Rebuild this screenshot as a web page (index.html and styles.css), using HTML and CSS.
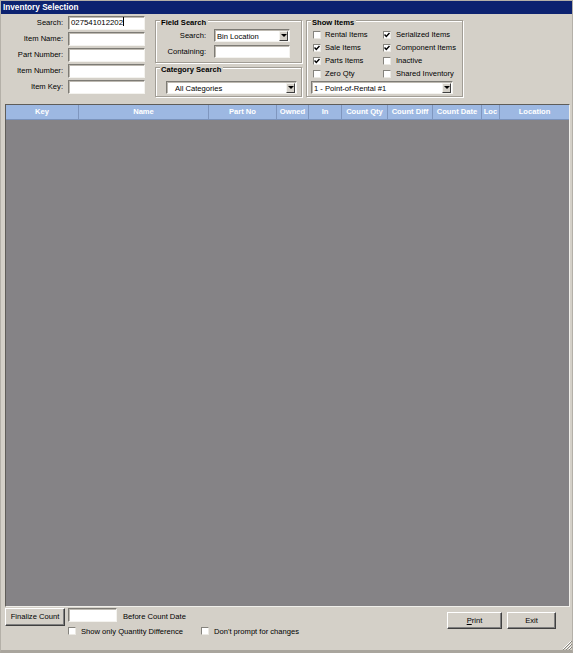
FILE: index.html
```html
<!DOCTYPE html>
<html>
<head>
<meta charset="utf-8">
<link rel="stylesheet" href="styles.css">
</head>
<body>
<div class="window">
  <div class="titlebar">Inventory Selection</div>
  <div class="top">
    <div class="search-form">
      <label>Search:</label><div class="input">027541012202<span class="caret"></span></div>
      <label>Item Name:</label><div class="input"></div>
      <label>Part Number:</label><div class="input"></div>
      <label>Item Number:</label><div class="input"></div>
      <label>Item Key:</label><div class="input"></div>
    </div>
    <div class="mid">
      <div class="group field-search">
        <div class="legend">Field Search</div>
        <div class="fs-body">
          <label>Search:</label>
          <div class="select"><span class="sel-text">Bin Location</span><span class="arrow"></span></div>
          <label>Containing:</label>
          <div class="input"></div>
        </div>
      </div>
      <div class="group cat-search">
        <div class="legend">Category Search</div>
        <div class="cat-body">
          <div class="select cat-select"><span class="sel-text">All Categories</span><span class="arrow"></span></div>
        </div>
      </div>
    </div>
    <div class="group show-items">
      <div class="legend">Show Items</div>
      <div class="checks">
        <div class="cbrow"><span class="cb"></span>Rental Items</div>
        <div class="cbrow"><span class="cb"><svg viewBox="0 0 6 6" width="6" height="6"><path d="M0.5 2.5 L2.3 4.4 L5.5 1" fill="none" stroke="#000" stroke-width="1.5"/></svg></span>Serialized Items</div>
        <div class="cbrow"><span class="cb"><svg viewBox="0 0 6 6" width="6" height="6"><path d="M0.5 2.5 L2.3 4.4 L5.5 1" fill="none" stroke="#000" stroke-width="1.5"/></svg></span>Sale Items</div>
        <div class="cbrow"><span class="cb"><svg viewBox="0 0 6 6" width="6" height="6"><path d="M0.5 2.5 L2.3 4.4 L5.5 1" fill="none" stroke="#000" stroke-width="1.5"/></svg></span>Component Items</div>
        <div class="cbrow"><span class="cb"><svg viewBox="0 0 6 6" width="6" height="6"><path d="M0.5 2.5 L2.3 4.4 L5.5 1" fill="none" stroke="#000" stroke-width="1.5"/></svg></span>Parts Items</div>
        <div class="cbrow"><span class="cb"></span>Inactive</div>
        <div class="cbrow"><span class="cb"></span>Zero Qty</div>
        <div class="cbrow"><span class="cb"></span>Shared Inventory</div>
      </div>
      <div class="select store-select"><span class="sel-text">1 - Point-of-Rental #1</span><span class="arrow"></span></div>
    </div>
  </div>

  <div class="grid">
    <div class="head">
      <div class="hc c-key">Key</div>
      <div class="hc c-name">Name</div>
      <div class="hc c-part">Part No</div>
      <div class="hc c-owned">Owned</div>
      <div class="hc c-in">In</div>
      <div class="hc c-cqty">Count Qty</div>
      <div class="hc c-cdiff">Count Diff</div>
      <div class="hc c-cdate">Count Date</div>
      <div class="hc c-loc">Loc</div>
      <div class="hc c-location">Location</div>
    </div>
    <div class="grid-body"></div>
  </div>

  <div class="bottom">
    <div class="bottom-left">
      <div class="brow">
        <div class="btn finalize">Finalize Count</div>
        <div class="input date-input"></div>
        <span class="before">Before Count Date</span>
      </div>
      <div class="bchecks">
        <div class="cbrow first"><span class="cb"></span>Show only Quantity Difference</div>
        <div class="cbrow"><span class="cb"></span>Don't prompt for changes</div>
      </div>
    </div>
    <div class="bottom-right">
      <div class="btn print"><u>P</u>rint</div>
      <div class="btn exit">Exit</div>
    </div>
  </div>

  <svg class="grip" width="10" height="10" viewBox="0 0 10 10">
    <path d="M9 1 L1 9 M9 4 L4 9 M9 7 L7 9" stroke="#fff" stroke-width="1"/>
    <path d="M10 1 L1 10 M10 4 L4 10 M10 7 L7 10" stroke="#8a877f" stroke-width="1"/>
  </svg>
</div>
</body>
</html>
```

FILE: styles.css
```css
* { box-sizing: border-box; }
html, body { margin: 0; padding: 0; }
body {
  width: 573px;
  height: 653px;
  overflow: hidden;
  background: #d4d0c8;
  font-family: "Liberation Sans", Arial, sans-serif;
  font-size: 7.6px;
  color: #000;
}
.window {
  position: relative;
  width: 573px;
  height: 653px;
  background: #d4d0c8;
  border: 1px solid #b4b0a8;
  border-bottom: 3px solid #a9a59d;
  display: flex;
  flex-direction: column;
}
.titlebar {
  height: 13px;
  line-height: 13px;
  background: #0c2270;
  color: #fff;
  font-weight: bold;
  font-size: 8.2px;
  padding-left: 2px;
}
.top {
  display: flex;
  align-items: flex-start;
  height: 83px;
  padding-top: 2px;
}
.search-form {
  display: grid;
  grid-template-columns: 62px 77px;
  grid-auto-rows: 14px;
  column-gap: 5px;
  row-gap: 2px;
}
label { text-align: right; line-height: 13px; white-space: nowrap; }
.search-form label { line-height: 14px; }
.input {
  background: #fff;
  height: 14px;
  border: 1px solid;
  border-color: #7d7b75 #f4f3ef #f4f3ef #7d7b75;
  box-shadow: inset 1px 1px 0 #bdb9b1;
  line-height: 12px;
  padding-left: 2px;
  font-size: 7.8px;
}
.caret {
  display: inline-block;
  width: 1px;
  height: 9px;
  background: #000;
  vertical-align: -1px;
}
.mid {
  margin-left: 10px;
  width: 147px;
  display: flex;
  flex-direction: column;
}
.group {
  border: 1px solid #a19d95;
  box-shadow: inset 1px 1px 0 #fff, 1px 1px 0 #fff;
}
.legend {
  width: max-content;
  height: 9px;
  line-height: 9px;
  margin: -3px 0 -6px 4px;
  padding: 0 2px 0 1px;
  background: #d4d0c8;
  font-weight: bold;
}
.field-search { margin-top: 4px; height: 43px; }
.fs-body {
  display: grid;
  grid-template-columns: 50px 76px;
  grid-auto-rows: 13px;
  column-gap: 8px;
  row-gap: 3px;
  padding-top: 8px;
}
.fs-body .input { height: 13px; }
.cat-search { margin-top: 4px; height: 30px; }
.cat-body { padding: 13px 0 0 10px; }
.select {
  background: #fff;
  height: 13px;
  border: 1px solid;
  border-color: #7d7b75 #f4f3ef #f4f3ef #7d7b75;
  box-shadow: inset 1px 1px 0 #bdb9b1;
  display: flex;
  align-items: center;
  padding: 0 1px 0 2px;
}
.sel-text { flex: 1; white-space: nowrap; padding-top: 1px; }
.cat-select { width: 131px; }
.cat-select .sel-text { padding-left: 6px; }
.arrow {
  width: 9px;
  height: 10px;
  background: #d4d0c8;
  border: 1px solid;
  border-color: #f4f3ef #404040 #404040 #f4f3ef;
  display: flex;
  align-items: center;
  justify-content: center;
}
.arrow::after {
  content: "";
  width: 0;
  height: 0;
  border-left: 3px solid transparent;
  border-right: 3px solid transparent;
  border-top: 3px solid #000;
}
.show-items {
  margin-left: 4px;
  margin-top: 4px;
  width: 157px;
  height: 77px;
}
.checks {
  display: grid;
  grid-template-columns: 70px auto;
  grid-auto-rows: 13px;
  padding: 7px 0 0 6px;
}
.cbrow {
  display: flex;
  align-items: center;
  gap: 4px;
  white-space: nowrap;
}
.cb {
  width: 8px;
  height: 8px;
  flex: none;
  background: #fff;
  border: 1px solid;
  border-color: #85837d #ebe9e3 #ebe9e3 #85837d;
  display: flex;
  align-items: center;
  justify-content: center;
}
.checks .cbrow:nth-child(even) { gap: 5px; }
.store-select { width: 142px; margin: 1px 0 0 4px; }
.grid {
  margin: 7px 0 0 4px;
  width: 565px;
  height: 503px;
  border: 1px solid;
  border-color: #5f5d59 #f0efea #f0efea #5f5d59;
  background: #858386;
  display: flex;
  flex-direction: column;
}
.head {
  display: flex;
  height: 15px;
  background: #9db8e2;
  border-bottom: 1px solid #7b93bb;
}
.hc {
  color: #fff;
  font-weight: bold;
  text-align: center;
  line-height: 14px;
  border-right: 1px solid #7f96be;
  white-space: nowrap;
  overflow: hidden;
}
.c-key { width: 73px; }
.c-name { width: 130px; }
.c-part { width: 68px; }
.c-owned { width: 32px; }
.c-in { width: 33px; }
.c-cqty { width: 46px; }
.c-cdiff { width: 45px; }
.c-cdate { width: 49px; }
.c-loc { width: 18px; }
.c-location { width: 69px; border-right: none; }
.grid-body { flex: 1; }
.bottom {
  display: flex;
  padding: 1px 0 0 4px;
}
.bottom-left { display: flex; flex-direction: column; }
.brow { display: flex; align-items: flex-start; }
.btn {
  background: #d4d0c8;
  border: 1px solid;
  border-color: #fff #404040 #404040 #fff;
  box-shadow: inset -1px -1px 0 #808080;
  text-align: center;
  white-space: nowrap;
}
.finalize { width: 60px; height: 18px; line-height: 16px; }
.date-input { margin-left: 3px; width: 49px; }
.before { margin-left: 6px; line-height: 17px; }
.bchecks {
  display: flex;
  height: 10px;
  margin-left: 63px;
  align-items: center;
}
.bchecks .first { width: 133px; gap: 4px; }
.bchecks .cbrow { gap: 5px; }
.bottom-right {
  margin-left: auto;
  margin-right: 16px;
  margin-top: 4px;
  display: flex;
  gap: 5px;
}
.print { width: 55px; height: 17px; line-height: 15px; }
.exit { width: 49px; height: 17px; line-height: 15px; }
.grip { position: absolute; right: 0; bottom: 0; }
```
